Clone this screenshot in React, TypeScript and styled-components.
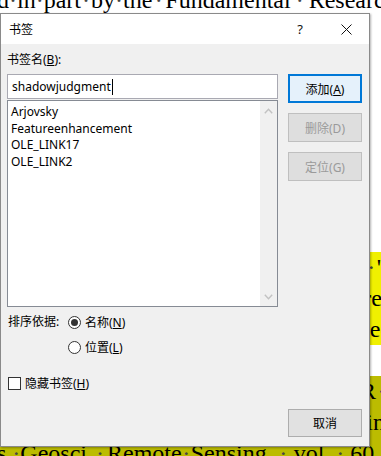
import styled, { createGlobalStyle } from 'styled-components';

const GlobalStyle = createGlobalStyle`
  html, body {
    margin: 0;
    padding: 0;
  }
  body {
    width: 381px;
    height: 456px;
    overflow: hidden;
    background: #fff;
  }
`;

const Page = styled.div`
  position: relative;
  width: 381px;
  height: 456px;
  overflow: hidden;
  background: #fff;
`;

const Doc = styled.div`
  margin-top: -15px;
  font-family: "Liberation Serif", "Times New Roman", serif;
  font-size: 24px;
  line-height: 31px;
  color: #000;
`;

const tones = {
  none: 'transparent',
  yellow: '#f0f000',
  olive: '#bcbc00',
};

const DocLine = styled.div<{ $tone?: keyof typeof tones; $end?: boolean }>`
  height: 31px;
  display: flex;
  justify-content: ${(p) => (p.$end ? 'flex-end' : 'flex-start')};
  white-space: nowrap;
  overflow: hidden;
  background: ${(p) => tones[p.$tone ?? 'none']};
`;

const DocGap = styled.div`
  height: 236px;
`;

const DocText = styled.span<{ $shift?: number; $end?: boolean }>`
  flex: none;
  margin-left: ${(p) => (p.$end ? 0 : p.$shift ?? 0)}px;
  margin-right: ${(p) => (p.$end ? -(p.$shift ?? 0) : 0)}px;
`;

// Word's space mark; justified lines stretch it
const Mark = styled.span<{ $gap?: number }>`
  color: #444;
  margin: 0 ${(p) => p.$gap ?? 1.5}px;
`;

const Dialog = styled.div`
  position: absolute;
  left: 0;
  top: 13px;
  width: 370px;
  height: 434px;
  box-sizing: border-box;
  border: 1px solid #8a8a8a;
  background: #f0f0f0;
  box-shadow: 1px 1px 2px rgba(0, 0, 0, 0.3);
  display: flex;
  flex-direction: column;
  font-family: "Noto Sans", "Noto Sans CJK SC", sans-serif;
  font-size: 12px;
  color: #000;
`;

const TitleBar = styled.div`
  height: 30px;
  flex: none;
  display: flex;
  align-items: center;
  background: #fff;
  padding-left: 8px;
`;

const Title = styled.div`
  flex: 1;
  font-size: 12px;
`;

const TitleButton = styled.div`
  width: 46px;
  height: 30px;
  display: flex;
  align-items: center;
  justify-content: center;
  font-size: 13px;
  color: #111;
`;

const Body = styled.div`
  flex: 1;
  display: flex;
  flex-direction: column;
  padding: 8px 7px 9px 6px;
`;

const TopGrid = styled.div`
  display: grid;
  grid-template-columns: 271px 74px;
  column-gap: 10px;
  grid-template-areas:
    'label .'
    'field buttons';
`;

const FieldLabel = styled.div`
  grid-area: label;
  line-height: 16px;
  margin-bottom: 6px;
`;

const Field = styled.div`
  grid-area: field;
  display: flex;
  flex-direction: column;
  gap: 1px;
`;

const NameInput = styled.div`
  height: 25px;
  box-sizing: border-box;
  border: 1px solid #a9a9b2;
  background: #fff;
  display: flex;
  align-items: center;
  padding-left: 4px;
  font-size: 12px;
`;

const Caret = styled.span`
  display: inline-block;
  width: 1px;
  height: 16px;
  background: #000;
  margin-left: 1px;
`;

const ListBox = styled.div`
  height: 207px;
  box-sizing: border-box;
  border: 1px solid #868b94;
  background: #fff;
  display: flex;
`;

const Items = styled.div`
  flex: 1;
  padding: 3px 0 0 3px;
`;

const Item = styled.div`
  height: 16.5px;
  line-height: 16.5px;
  font-size: 12px;
`;

const ScrollBar = styled.div`
  width: 17px;
  background: #f0f0f0;
  display: flex;
  flex-direction: column;
  justify-content: space-between;
  align-items: center;
  padding: 7px 0 6px;
`;

const ButtonStack = styled.div`
  grid-area: buttons;
  display: flex;
  flex-direction: column;
  gap: 10px;
`;

const Button = styled.div<{ $variant?: 'default' | 'disabled' | 'normal' }>`
  height: 29px;
  box-sizing: border-box;
  display: flex;
  align-items: center;
  justify-content: center;
  font-size: 12px;
  border: 1px solid
    ${(p) => (p.$variant === 'default' ? '#0078d7' : p.$variant === 'disabled' ? '#bfbfbf' : '#adadad')};
  box-shadow: ${(p) => (p.$variant === 'default' ? 'inset 0 0 0 1px #0078d7' : 'none')};
  background: ${(p) => (p.$variant === 'default' ? '#e5f1fb' : p.$variant === 'disabled' ? '#dedede' : '#e1e1e1')};
  color: ${(p) => (p.$variant === 'disabled' ? '#9a9a9a' : '#000')};
`;

const SortRow = styled.div`
  display: flex;
  margin-top: 6px;
  padding-left: 1px;
`;

const SortLabel = styled.div`
  width: 60px;
  line-height: 18px;
`;

const RadioGroup = styled.div`
  display: flex;
  flex-direction: column;
  gap: 7px;
`;

const Option = styled.div`
  height: 18px;
  display: flex;
  align-items: center;
  gap: 4px;
`;

const Radio = styled.span<{ $checked?: boolean }>`
  width: 13px;
  height: 13px;
  box-sizing: border-box;
  border-radius: 50%;
  border: 1px solid #333;
  background: #fff;
  display: flex;
  align-items: center;
  justify-content: center;
  &::after {
    content: '';
    width: 7px;
    height: 7px;
    border-radius: 50%;
    background: ${(p) => (p.$checked ? '#333' : 'transparent')};
  }
`;

const CheckRow = styled.div`
  height: 18px;
  margin-top: 18px;
  padding-left: 1px;
  display: flex;
  align-items: center;
  gap: 4px;
`;

const Checkbox = styled.span`
  width: 13px;
  height: 13px;
  box-sizing: border-box;
  border: 1px solid #333;
  background: #fff;
`;

const Footer = styled.div`
  margin-top: auto;
  display: flex;
  justify-content: flex-end;
`;

const CancelButton = styled(Button)`
  width: 74px;
  height: 28px;
`;

const Chevron = ({ up }: { up?: boolean }) => (
  <svg width="9" height="6" viewBox="0 0 9 6">
    <polyline
      points={up ? '0.8,5.2 4.5,1.2 8.2,5.2' : '0.8,0.8 4.5,4.8 8.2,0.8'}
      fill="none"
      stroke="#c2c2c2"
      strokeWidth="1.4"
    />
  </svg>
);

const CloseIcon = () => (
  <svg width="11" height="11" viewBox="0 0 11 11">
    <path d="M0.5 0.5 L10.5 10.5 M10.5 0.5 L0.5 10.5" stroke="#111" strokeWidth="1" />
  </svg>
);

const bookmarks = ['Arjovsky', 'Featureenhancement', 'OLE_LINK17', 'OLE_LINK2'];

export default function App() {
  return (
    <Page>
      <GlobalStyle />
      <Doc>
        <DocLine>
          <DocText $shift={-3}>
            d<Mark $gap={0}>·</Mark>in<Mark $gap={0}>·</Mark>part<Mark $gap={1}>·</Mark>by<Mark $gap={0}>·</Mark>
            the<Mark $gap={2.5}>·</Mark>Fundamental<Mark $gap={5}>·</Mark>Research<Mark>·</Mark>Funds
          </DocText>
        </DocLine>
        <DocGap />
        <DocLine $tone="yellow" $end>
          <DocText $end $shift={0}>
            image,<Mark>·</Mark>'
          </DocText>
        </DocLine>
        <DocLine $tone="yellow" $end>
          <DocText $end $shift={1}>
            feature
          </DocText>
        </DocLine>
        <DocLine $tone="yellow" $end>
          <DocText $end $shift={10}>
            spec
          </DocText>
        </DocLine>
        <DocLine />
        <DocLine $tone="olive" $end>
          <DocText $end $shift={6}>
            GAR<Mark>·</Mark>
          </DocText>
        </DocLine>
        <DocLine $tone="olive" $end>
          <DocText $end $shift={4}>
            in
          </DocText>
        </DocLine>
        <DocLine $tone="olive">
          <DocText $shift={-3}>
            s.<Mark $gap={0}>·</Mark>Geosci.<Mark $gap={3}>·</Mark>Remote<Mark $gap={0.5}>·</Mark>Sensing,
            <Mark $gap={6.5}>·</Mark>vol.<Mark $gap={6}>·</Mark>60,
          </DocText>
        </DocLine>
      </Doc>

      <Dialog>
        <TitleBar>
          <Title>书签</Title>
          <TitleButton>?</TitleButton>
          <TitleButton>
            <CloseIcon />
          </TitleButton>
        </TitleBar>
        <Body>
          <TopGrid>
            <FieldLabel>
              书签名(<u>B</u>):
            </FieldLabel>
            <Field>
              <NameInput>
                shadowjudgment
                <Caret />
              </NameInput>
              <ListBox>
                <Items>
                  {bookmarks.map((b) => (
                    <Item key={b}>{b}</Item>
                  ))}
                </Items>
                <ScrollBar>
                  <Chevron up />
                  <Chevron />
                </ScrollBar>
              </ListBox>
            </Field>
            <ButtonStack>
              <Button $variant="default">
                <span>
                  添加(<u>A</u>)
                </span>
              </Button>
              <Button $variant="disabled">删除(D)</Button>
              <Button $variant="disabled">定位(G)</Button>
            </ButtonStack>
          </TopGrid>

          <SortRow>
            <SortLabel>排序依据:</SortLabel>
            <RadioGroup>
              <Option>
                <Radio $checked />
                <span>
                  名称(<u>N</u>)
                </span>
              </Option>
              <Option>
                <Radio />
                <span>
                  位置(<u>L</u>)
                </span>
              </Option>
            </RadioGroup>
          </SortRow>

          <CheckRow>
            <Checkbox />
            <span>
              隐藏书签(<u>H</u>)
            </span>
          </CheckRow>

          <Footer>
            <CancelButton $variant="normal">取消</CancelButton>
          </Footer>
        </Body>
      </Dialog>
    </Page>
  );
}
